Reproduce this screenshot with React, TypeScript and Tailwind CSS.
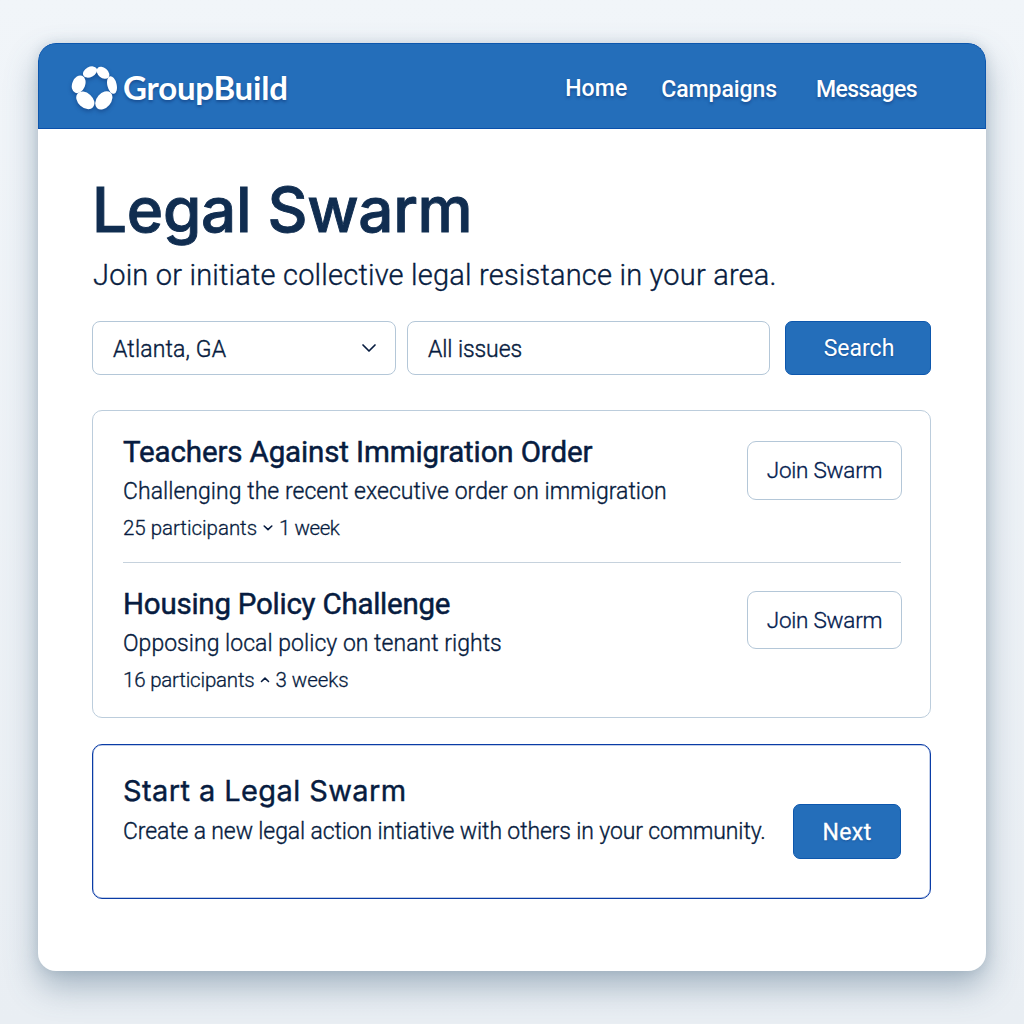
import React from 'react';

function LogoMark() {
  return (
    <svg
      viewBox="15 15 141 135"
      className="mt-0.5 h-[45px] w-[47px] shrink-0 drop-shadow-[0_2px_2px_rgba(8,40,100,0.45)]"
      fill="#fff"
    >
      <ellipse cx="72" cy="36" rx="22.5" ry="15" transform="rotate(-28 72 36)" />
      <ellipse cx="111" cy="38.5" rx="21.5" ry="15" transform="rotate(40 111 38.5)" />
      <ellipse cx="38" cy="73" rx="27.5" ry="19.5" transform="rotate(-68 38 73)" />
      <ellipse cx="138" cy="75" rx="27" ry="14" transform="rotate(77 138 75)" />
      <ellipse cx="58" cy="121" rx="31" ry="22" transform="rotate(42 58 121)" />
      <ellipse cx="113.5" cy="121" rx="31" ry="21.5" transform="rotate(-50 113.5 121)" />
    </svg>
  );
}

function SmallChevron({ up = false }: { up?: boolean }) {
  return (
    <svg
      viewBox="0 0 10 8"
      className="h-2 w-2.5 shrink-0"
      fill="none"
      stroke="currentColor"
      strokeWidth="1.6"
      strokeLinecap="round"
      strokeLinejoin="round"
    >
      <path d={up ? 'M1.5 5.5 5 2.2 8.5 5.5' : 'M1.2 2 5 5.6 8.8 2'} />
    </svg>
  );
}

function JoinButton({ className }: { className: string }) {
  return (
    <button
      className={`w-[155px] shrink-0 rounded-[9px] border border-[#b4c7d8] bg-white text-[22.5px] font-light tracking-[-0.24px] text-[#04204f] [-webkit-text-stroke:0.35px] ${className}`}
    >
      Join Swarm
    </button>
  );
}

export default function App() {
  return (
    <div className="h-[1024px] w-[1024px] overflow-hidden bg-linear-to-b from-[#f1f5f9] to-[#e9eef3] pt-[43px] pl-[38px] font-['Roboto',sans-serif] text-[#071c40]">
      <div className="h-[928px] w-[948px] overflow-hidden rounded-[18px] bg-white shadow-[0_16px_32px_rgba(75,105,130,0.42),0_0_12px_rgba(75,105,130,0.18)]">
        <header className="flex h-[86px] items-center rounded-t-[18px] border border-[#0d57ad] border-b-[#0a50ab] bg-[#246eba] pr-[68px] pl-8 text-white text-shadow-[0_2px_3px_rgba(8,40,100,0.45)]">
          <LogoMark />
          <span className="ml-[5px] pt-px text-[33px] leading-10 font-bold tracking-[-0.2px] font-['Lato',sans-serif]">
            GroupBuild
          </span>
          <nav className="ml-auto flex pt-[7px] text-[23px] leading-8 font-medium">
            <a className="-mt-px tracking-[0.1px]">Home</a>
            <a className="ml-[34px] tracking-[-0.06px]">Campaigns</a>
            <a className="ml-[39px] tracking-[-0.6px]">Messages</a>
          </nav>
        </header>

        <main className="pr-[55px] pl-[54px]">
          <h1 className="pt-[45px] text-[62px] leading-[72px] font-medium tracking-[-0.3px] text-[#102d50] [-webkit-text-stroke:0.9px] font-['Inter',sans-serif]">
            Legal Swarm
          </h1>
          <p className="mt-[9px] ml-px text-[29px] leading-10 font-light tracking-[0.2px] [-webkit-text-stroke:0.35px]">
            Join or initiate collective legal resistance in your area.
          </p>

          <div className="mt-[26px] flex h-[54px]">
            <div className="flex w-[304px] items-center justify-between rounded-lg border border-[#b4c7d8] pr-[18px] pl-5 text-[23px] font-light tracking-[0.15px] [-webkit-text-stroke:0.4px]">
              <span className="pt-1">Atlanta, GA</span>
              <svg
                viewBox="0 0 16 10"
                className="h-2.5 w-4"
                fill="none"
                stroke="currentColor"
                strokeWidth="1.7"
                strokeLinecap="round"
                strokeLinejoin="round"
              >
                <path d="M2 2l6 6 6-6" />
              </svg>
            </div>
            <div className="ml-[11px] flex w-[363px] items-center rounded-lg border border-[#b4c7d8] pt-1 pl-5 text-[23px] font-light tracking-[-0.1px] [-webkit-text-stroke:0.4px]">
              All issues
            </div>
            <button className="ml-[15px] flex-1 rounded-[7px] border border-[#0d57ad] bg-[#246eba] pt-0.5 pl-0.5 text-[23px] text-white text-shadow-[0_1px_2px_rgba(8,40,100,0.4)]">
              Search
            </button>
          </div>

          <section className="mt-[35px] h-[308px] rounded-[10px] border border-[#bccddc] pr-7 pl-[30px]">
            <div className="mr-px flex h-[152px] justify-between border-b border-[#c6d2dd] pt-[23px]">
              <div>
                <h2 className="text-[29.5px] leading-9 tracking-[-0.13px] [-webkit-text-stroke:0.5px]">
                  Teachers Against Immigration Order
                </h2>
                <p className="mt-1.5 text-[23px] leading-8 font-light tracking-[0.04px] [-webkit-text-stroke:0.35px]">
                  Challenging the recent executive order on immigration
                </p>
                <p className="mt-1.5 flex items-center text-[20.5px] leading-7 font-light tracking-[-0.03px] [-webkit-text-stroke:0.3px]">
                  25 participants
                  <span className="mx-1.5"><SmallChevron /></span>
                  <span className="tracking-[-0.45px]">1 week</span>
                </p>
              </div>
              <JoinButton className="-mr-px mt-[7px] h-[59px]" />
            </div>
            <div className="flex justify-between pt-[23px]">
              <div>
                <h2 className="text-[29.5px] leading-9 tracking-[-0.24px] [-webkit-text-stroke:0.5px]">
                  Housing Policy Challenge
                </h2>
                <p className="mt-1.5 text-[23px] leading-8 font-light tracking-[0.03px] [-webkit-text-stroke:0.35px]">
                  Opposing local policy on tenant rights
                </p>
                <p className="mt-1.5 flex items-center text-[20.5px] leading-7 font-light tracking-[-0.2px] [-webkit-text-stroke:0.3px]">
                  16 participants
                  <span className="mr-1.5 ml-[5px]"><SmallChevron up /></span>
                  <span className="tracking-[-0.05px]">3 weeks</span>
                </p>
              </div>
              <JoinButton className="mt-[5px] h-[58px] pt-0.5" />
            </div>
          </section>

          <section className="mt-[26px] flex h-[155px] justify-between rounded-[10px] border border-[#0a3ca6] pr-[29px] pl-[30px] ring-[0.5px] ring-[#0a3ca6]/50 ring-inset">
            <div className="pt-7">
              <h2 className="text-[29px] leading-9 tracking-[0.4px] [-webkit-text-stroke:0.4px] font-['Inter',sans-serif]">
                Start a Legal Swarm
              </h2>
              <p className="mt-[7px] text-[23px] leading-8 font-light tracking-[-0.13px] whitespace-nowrap [-webkit-text-stroke:0.35px]">
                Create a new legal action intiative with others in your community.
              </p>
            </div>
            <button className="mt-[59px] h-[55px] w-[108px] rounded-[7px] border border-[#0d57ad] bg-[#246eba] pt-[3px] text-[23px] tracking-[0.4px] text-white [-webkit-text-stroke:0.3px] text-shadow-[0_1px_2px_rgba(8,40,100,0.4)]">
              Next
            </button>
          </section>
        </main>
      </div>
    </div>
  );
}
